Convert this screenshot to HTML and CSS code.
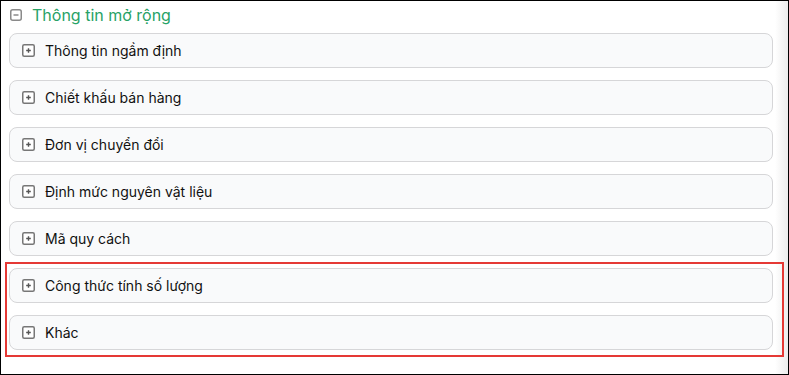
FILE: index.html
```html
<!DOCTYPE html>
<html lang="vi">
<head>
    <meta charset="UTF-8">
    <meta name="viewport" content="width=device-width, initial-scale=1.0">
    <title>Thông tin mở rộng</title>
    <link rel="stylesheet" href="styles.css">
</head>
<body>
    <div class="frame">
        <div class="main">
            <div class="section-head">
                <svg class="toggle" width="12" height="12" viewBox="0 0 12 12">
                    <rect x="0.75" y="0.75" width="10.5" height="10.5" rx="2" fill="none" stroke="#8a8a8a" stroke-width="1.5"/>
                    <line x1="3.5" y1="6" x2="8.5" y2="6" stroke="#8a8a8a" stroke-width="1.5"/>
                </svg>
                <h2>Thông tin mở rộng</h2>
            </div>
            <div class="panels">
                <div class="panel">
                    <svg class="plus" width="13" height="13" viewBox="0 0 13 13">
                        <rect x="0.75" y="0.75" width="11.5" height="11.5" rx="1.5" fill="#fff" stroke="#777" stroke-width="1.5"/>
                        <path d="M6.5 4.2v4.6M4.2 6.5h4.6" stroke="#555" stroke-width="1.4"/>
                    </svg>
                    <span>Thông tin ngầm định</span>
                </div>
                <div class="panel">
                    <svg class="plus" width="13" height="13" viewBox="0 0 13 13">
                        <rect x="0.75" y="0.75" width="11.5" height="11.5" rx="1.5" fill="#fff" stroke="#777" stroke-width="1.5"/>
                        <path d="M6.5 4.2v4.6M4.2 6.5h4.6" stroke="#555" stroke-width="1.4"/>
                    </svg>
                    <span>Chiết khấu bán hàng</span>
                </div>
                <div class="panel">
                    <svg class="plus" width="13" height="13" viewBox="0 0 13 13">
                        <rect x="0.75" y="0.75" width="11.5" height="11.5" rx="1.5" fill="#fff" stroke="#777" stroke-width="1.5"/>
                        <path d="M6.5 4.2v4.6M4.2 6.5h4.6" stroke="#555" stroke-width="1.4"/>
                    </svg>
                    <span>Đơn vị chuyển đổi</span>
                </div>
                <div class="panel">
                    <svg class="plus" width="13" height="13" viewBox="0 0 13 13">
                        <rect x="0.75" y="0.75" width="11.5" height="11.5" rx="1.5" fill="#fff" stroke="#777" stroke-width="1.5"/>
                        <path d="M6.5 4.2v4.6M4.2 6.5h4.6" stroke="#555" stroke-width="1.4"/>
                    </svg>
                    <span>Định mức nguyên vật liệu</span>
                </div>
                <div class="panel">
                    <svg class="plus" width="13" height="13" viewBox="0 0 13 13">
                        <rect x="0.75" y="0.75" width="11.5" height="11.5" rx="1.5" fill="#fff" stroke="#777" stroke-width="1.5"/>
                        <path d="M6.5 4.2v4.6M4.2 6.5h4.6" stroke="#555" stroke-width="1.4"/>
                    </svg>
                    <span>Mã quy cách</span>
                </div>
                <div class="panel">
                    <svg class="plus" width="13" height="13" viewBox="0 0 13 13">
                        <rect x="0.75" y="0.75" width="11.5" height="11.5" rx="1.5" fill="#fff" stroke="#777" stroke-width="1.5"/>
                        <path d="M6.5 4.2v4.6M4.2 6.5h4.6" stroke="#555" stroke-width="1.4"/>
                    </svg>
                    <span>Công thức tính số lượng</span>
                </div>
                <div class="panel">
                    <svg class="plus" width="13" height="13" viewBox="0 0 13 13">
                        <rect x="0.75" y="0.75" width="11.5" height="11.5" rx="1.5" fill="#fff" stroke="#777" stroke-width="1.5"/>
                        <path d="M6.5 4.2v4.6M4.2 6.5h4.6" stroke="#555" stroke-width="1.4"/>
                    </svg>
                    <span>Khác</span>
                </div>
            </div>
        </div>
        <div class="edge"></div>
        <div class="highlight"></div>
    </div>
</body>
</html>
```

FILE: styles.css
```css
body {
    margin: 0;
    padding: 0;
    font-family: Inter, "Noto Sans", sans-serif;
    background: #fff;
}
.frame {
    position: relative;
    display: flex;
    width: 789px;
    height: 375px;
    box-sizing: border-box;
    border: 1px solid #000;
    background: #fff;
}
.main {
    flex: 1;
    padding: 2px 2px 0 8px;
}
.section-head {
    display: flex;
    align-items: center;
    height: 24px;
    margin-bottom: 6px;
    padding-left: 1px;
}
.toggle {
    flex: none;
    margin-right: 10px;
}
.section-head h2 {
    margin: 0;
    font-size: 16px;
    font-weight: 400;
    color: #27a266;
}
.panels {
    display: flex;
    flex-direction: column;
    gap: 12px;
}
.panel {
    display: flex;
    align-items: center;
    height: 35px;
    box-sizing: border-box;
    padding-left: 12px;
    border: 1px solid #d6d6d8;
    border-radius: 8px;
    background: #f9fafb;
    font-size: 14px;
    color: #111;
}
.plus {
    flex: none;
    margin-right: 10px;
}
.edge {
    width: 13px;
    background: linear-gradient(to right, #fff, #ececec);
}
.highlight {
    position: absolute;
    left: 4px;
    top: 261px;
    width: 779px;
    height: 95px;
    box-sizing: border-box;
    border: 2px solid #e53935;
    pointer-events: none;
}
```
